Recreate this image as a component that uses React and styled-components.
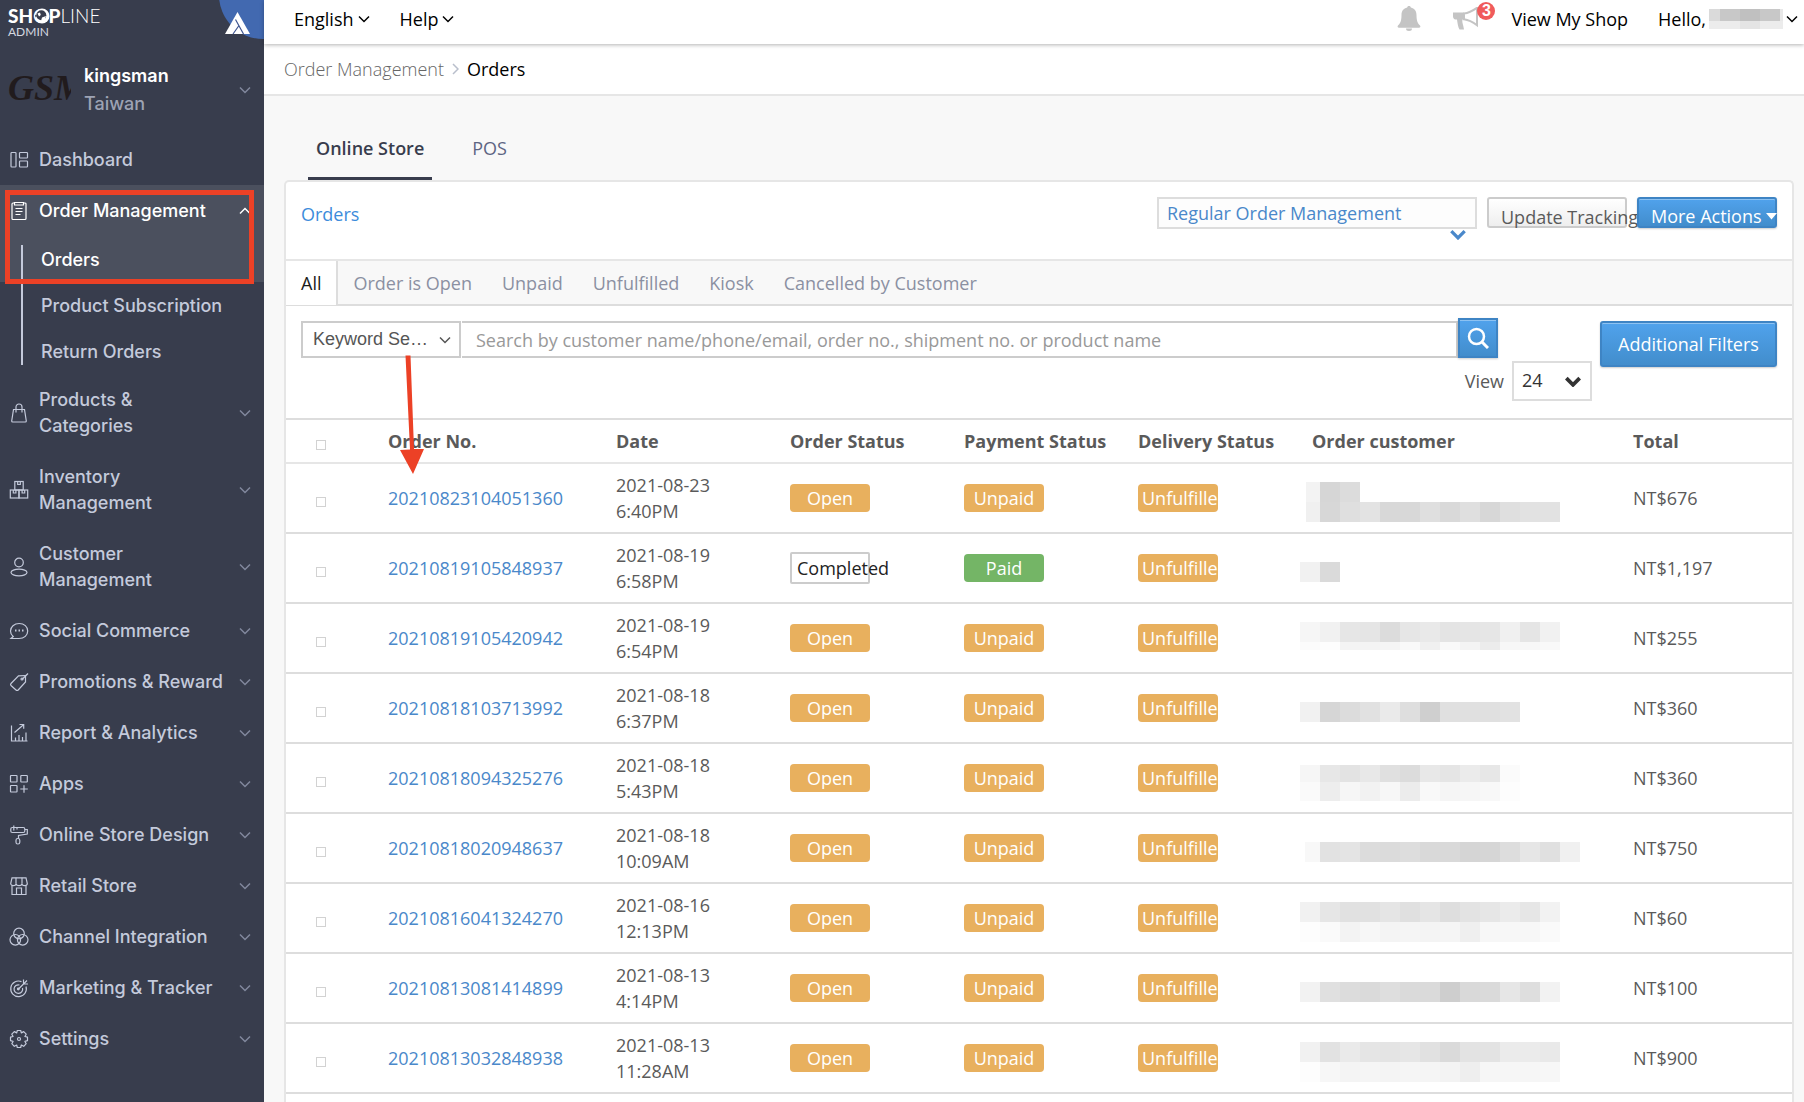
/**
 * Orders page of the store admin
 *
 * Sidebar navigation, top bar and the order list
 */

import React from 'react';
import styled, { createGlobalStyle, ThemeProvider } from 'styled-components';

const theme = {
  colors: {
    sidebar: '#383d4d',
    sidebarActive: '#4b505e',
    sidebarText: '#c4cadb',
    sidebarMuted: '#9da3b4',
    link: '#4a88ca',
    text: '#5a5a5a',
    page: '#f8f8f8',
    line: '#e6e6e6',
    rowLine: '#dddddd',
    control: '#cccccc',
    orange: '#e8b05e',
    green: '#74b566',
    mark: '#ec4126'
  },
  fonts: {
    body: "'Open Sans', 'Noto Sans', sans-serif",
    nav: "Inter, 'Liberation Sans', sans-serif"
  }
};

const GlobalStyle = createGlobalStyle`
  *, *::before, *::after {
    box-sizing: border-box;
  }

  body {
    margin: 0;
    background: ${theme.colors.page};
    color: ${theme.colors.text};
    font-family: ${theme.fonts.body};
    font-size: 18px;
    line-height: 26px;
  }

  a {
    color: inherit;
    text-decoration: none;
  }

  button, input, select {
    font: inherit;
    margin: 0;
  }
`;

/* ---------- layout ---------- */

const Page = styled.div`
  display: flex;
  height: 100vh;
  overflow: hidden;
`;

const Main = styled.main`
  flex: 1;
  min-width: 0;
  display: flex;
  flex-direction: column;
`;

/* ---------- sidebar ---------- */

const Sidebar = styled.aside`
  position: relative;
  flex: 0 0 264px;
  background: ${props => props.theme.colors.sidebar};
  color: ${props => props.theme.colors.sidebarText};
  font-family: ${props => props.theme.fonts.nav};
  font-weight: 500;
`;

const Brand = styled.div`
  height: 54px;
  padding: 6px 8px;
  color: #ffffff;
  font-family: Lato, sans-serif;
`;

const BrandName = styled.div`
  position: relative;
  width: max-content;
  font-size: 19px;
  line-height: 20px;
  font-weight: 300;

  b {
    font-weight: 900;
  }
`;

const BrandBird = styled.svg`
  position: absolute;
  left: 26px;
  top: 2px;
`;

const BrandSub = styled.div`
  font-size: 12px;
  line-height: 12px;
  font-weight: 400;
  color: #d5d8e0;
`;

const CornerLogo = styled.svg`
  position: absolute;
  top: 0;
  right: 0;
`;

const Profile = styled.div`
  display: flex;
  align-items: center;
  height: 80px;
  padding: 0 13px 8px 8px;
`;

const ShopLogo = styled.svg`
  margin: 0 13px 4px 0;
`;

const ShopInfo = styled.div`
  flex: 1;
  line-height: 28px;
  color: ${props => props.theme.colors.sidebarMuted};

  strong {
    display: block;
    font-weight: 600;
    color: #ffffff;
  }
`;

const NavGroup = styled.div`
  background: ${props => props.$open ? props.theme.colors.sidebarActive : 'none'};
`;

const NavLink = styled.a`
  display: flex;
  align-items: center;
  padding: 13px 13px 12px 9px;
  color: ${props => props.$active ? '#ffffff' : 'inherit'};
`;

const NavLabel = styled.span`
  flex: 1;
  margin-left: 10px;
  white-space: pre;
`;

const SubNav = styled.div`
  position: relative;

  &::before {
    content: '';
    position: absolute;
    left: 21px;
    top: 9px;
    bottom: 9px;
    width: 2px;
    background: ${props => props.theme.colors.sidebarText};
  }
`;

const SubLink = styled.a`
  display: block;
  padding: 2px 0 0 41px;
  line-height: 44px;
  color: ${props => props.$active ? '#ffffff' : 'inherit'};
  background: ${props => props.$active ? props.theme.colors.sidebarActive : props.theme.colors.sidebar};
`;

const Highlight = styled.div`
  position: absolute;
  left: 5px;
  right: 10px;
  top: 190px;
  height: 94px;
  border: 5px solid ${props => props.theme.colors.mark};
  pointer-events: none;
`;

/* ---------- top bar ---------- */

const TopBar = styled.header`
  position: relative;
  z-index: 1;
  display: flex;
  align-items: center;
  height: 44px;
  padding: 0 6px 6px 30px;
  background: #ffffff;
  color: #000000;
  box-shadow: 0 1px 4px rgba(0, 0, 0, 0.3);
`;

const MenuButton = styled.button`
  display: flex;
  align-items: center;
  gap: ${props => props.$last ? '3px' : '4px'};
  margin-right: ${props => props.$last ? '0' : '30px'};
  padding: 0;
  border: 0;
  background: none;
  color: inherit;
`;

const Spacer = styled.div`
  flex: 1;
`;

const IconButton = styled.button`
  position: relative;
  display: flex;
  margin-right: 32px;
  padding: 0;
  border: 0;
  background: none;
`;

const Count = styled.span`
  position: absolute;
  right: -16px;
  top: -5px;
  width: 18px;
  height: 18px;
  border-radius: 50%;
  background: #f05b5b;
  color: #ffffff;
  font: bold 16px/18px 'Liberation Sans', sans-serif;
  text-align: center;
`;

const ShopLink = styled.a`
  margin-right: 30px;
`;

const Breadcrumb = styled.nav`
  display: flex;
  align-items: center;
  gap: 8px;
  height: 52px;
  padding: 0 20px;
  background: #ffffff;
  border-bottom: 2px solid ${props => props.theme.colors.line};
  color: #000000;

  a {
    font-weight: 300;
    color: #666666;
  }
`;

/* ---------- content ---------- */

const StoreTabs = styled.div`
  display: flex;
  align-items: flex-end;
  gap: 32px;
  height: 84px;
  padding: 0 44px;
`;

const StoreTab = styled.button`
  height: 64px;
  padding: 18px 8px 15px;
  border: 0;
  border-bottom: 3px solid ${props => props.$active ? props.theme.colors.sidebar : 'transparent'};
  background: none;
  font-weight: ${props => props.$active ? 600 : 400};
  color: ${props => props.$active ? props.theme.colors.sidebar : '#5d6583'};
`;

const Panel = styled.section`
  flex: 1;
  margin: 0 10px 0 20px;
  border: 2px solid ${props => props.theme.colors.line};
  border-bottom: 0;
  border-radius: 5px 5px 0 0;
  background: #ffffff;
`;

const PanelHead = styled.div`
  display: flex;
  align-items: flex-start;
  height: 79px;
  padding: 15px;
  border-bottom: 2px solid ${props => props.theme.colors.line};
`;

const PanelTitle = styled.a`
  flex: 1;
  padding-top: 4px;
  color: #3c8cdb;
`;

const SelectBox = styled.div`
  position: relative;
  flex: none;

  svg {
    position: absolute;
    pointer-events: none;
  }
`;

const TypeSelect = styled.select`
  display: block;
  width: 320px;
  height: 32px;
  padding: 0 8px;
  appearance: none;
  border: 2px solid ${props => props.theme.colors.rowLine};
  border-radius: 0;
  background: #fdfdfd;
  color: ${props => props.theme.colors.link};

  & + svg {
    right: 11px;
    top: 32px;
  }
`;

const PlainButton = styled.button`
  width: 140px;
  height: 31px;
  margin: 0 10px;
  padding: 7px 0 0 12px;
  border: 2px solid ${props => props.theme.colors.control};
  border-radius: 3px;
  background: linear-gradient(#ffffff, #eeeeee);
  color: ${props => props.theme.colors.text};
  line-height: 22px;
  text-align: left;
  white-space: nowrap;
`;

const BlueButton = styled.button`
  display: flex;
  align-items: center;
  justify-content: center;
  flex: none;
  border: 2px solid #3e84c4;
  border-radius: 3px;
  background: linear-gradient(#50a2ec, #428dcc);
  box-shadow: inset 0 1px 0 rgba(255, 255, 255, 0.35), 0 1px 2px rgba(0, 0, 0, 0.2);
  color: #ffffff;
  white-space: nowrap;
`;

const ActionsButton = styled(BlueButton)`
  width: 140px;
  height: 31px;
  padding: 7px 0 0 12px;
  justify-content: flex-start;
  gap: 4px;
  line-height: 22px;

  svg {
    flex: none;
  }
`;

const SearchButton = styled(BlueButton)`
  width: 40px;
  height: 40px;
  padding: 0;
  border-radius: 0;
`;

const FilterButton = styled(BlueButton)`
  width: 177px;
  height: 46px;
  margin-top: 3px;
  padding: 0;
`;

const StatusTabs = styled.div`
  display: flex;
  height: 45px;
  border-bottom: 2px solid ${props => props.theme.colors.rowLine};
  background: ${props => props.theme.colors.page};
`;

const StatusTab = styled.button`
  padding: 0 15px;
  border: 0;
  background: none;
  color: #8b90a2;

  ${props => props.$active && `
    border-right: 2px solid #dddddd;
    height: 44px;
    background: #ffffff;
    color: #1b1b1b;
  `}
`;

const Filters = styled.div`
  display: flex;
  align-items: flex-start;
  gap: 8px;
  padding: 12px 15px 17px;
`;

const FilterFields = styled.div`
  flex: 1;
  min-width: 0;
`;

const SearchRow = styled.div`
  display: flex;
  align-items: flex-end;
  margin-right: 94px;
`;

const KeywordSelect = styled.select`
  display: block;
  width: 160px;
  height: 37px;
  padding: 0 10px 2px;
  appearance: none;
  border: 2px solid ${props => props.theme.colors.control};
  border-radius: 0;
  background: #ffffff;
  color: #555555;
  font-family: 'Liberation Sans', sans-serif;

  & + svg {
    right: 10px;
    top: 15px;
  }
`;

const SearchInput = styled.input`
  flex: 1;
  min-width: 0;
  height: 37px;
  margin-left: 1px;
  padding: 0 14px;
  border: 2px solid ${props => props.theme.colors.control};
  border-left: 0;
  border-radius: 0;
  background: #ffffff;

  &::placeholder {
    color: #999999;
    opacity: 1;
  }
`;

const ViewRow = styled.div`
  display: flex;
  align-items: center;
  justify-content: flex-end;
  gap: 8px;
  margin-top: 3px;
`;

const ViewSelect = styled.select`
  display: block;
  width: 80px;
  height: 40px;
  padding: 0 8px 2px;
  appearance: none;
  border: 2px solid ${props => props.theme.colors.rowLine};
  border-radius: 0;
  background: #ffffff;
  color: #333333;

  & + svg {
    right: 11px;
    top: 15px;
  }
`;

/* ---------- table ---------- */

const Table = styled.table`
  width: 100%;
  table-layout: fixed;
  border-collapse: separate;
  border-spacing: 0;
  border-top: 2px solid ${props => props.theme.colors.rowLine};

  th {
    height: 44px;
    padding: 0;
    border-bottom: 2px solid ${props => props.theme.colors.line};
    font-weight: 700;
    text-align: left;
    white-space: nowrap;
  }

  td {
    position: relative;
    height: 70px;
    padding: 0;
    border-bottom: 2px solid ${props => props.theme.colors.rowLine};
  }
`;

const Check = styled.input`
  display: block;
  width: 10px;
  height: 10px;
  margin: 8px 0 0 30px;
  appearance: none;
  border: 1px solid #d2d2d2;
  background: #ffffff;
`;

const OrderLink = styled.a`
  color: ${props => props.theme.colors.link};
`;

const DateText = styled.span`
  white-space: pre;
`;

const Badge = styled.span`
  display: block;
  width: 80px;
  height: 28px;
  padding: 0 4px;
  border-radius: 4px;
  background: ${props => props.$tone === 'green' ? props.theme.colors.green : props.theme.colors.orange};
  color: #ffffff;
  line-height: 28px;
  text-align: center;
  white-space: nowrap;
  overflow: hidden;
`;

const OutlineBadge = styled(Badge)`
  height: 32px;
  padding: 0 5px;
  border: 2px solid ${props => props.theme.colors.control};
  border-radius: 2px;
  background: #ffffff;
  color: #222222;
  overflow: visible;
`;

const MaskSvg = styled.svg`
  position: absolute;
  left: -12px;
  top: 0;
`;

const Arrow = styled.svg`
  position: absolute;
  left: 399px;
  top: 354px;
  pointer-events: none;
`;

/* ---------- icons ---------- */

const Chevron = ({ width = 12, height = 8, color = 'currentColor', stroke = 2, up }) => (
  <svg width={width} height={height} viewBox="0 0 12 8" fill="none" stroke={color} strokeWidth={stroke} aria-hidden="true">
    <path d={up ? 'M1 6.5 6 1.5l5 5' : 'M1 1.5 6 6.5l5-5'} />
  </svg>
);

const navIcons = {
  dashboard: (
    <>
      <rect x="2" y="2.5" width="5" height="14.5" rx="0.8" />
      <rect x="10.5" y="2.5" width="8" height="5.5" rx="0.8" />
      <rect x="10.5" y="11" width="8" height="6" rx="0.8" />
    </>
  ),
  orders: (
    <>
      <path d="M5.5 2H4a1 1 0 0 0-1 1v14.500a1 1 0 0 0 1 1h12a1 1 0 0 0 1-1V3a1 1 0 0 0-1-1h-1.500" />
      <path d="M5.500 1.500h9v2.500h-9z" />
      <path d="M6.500 7.500h7M6.500 10.500h7M6.500 13.500h5" />
    </>
  ),
  bag: (
    <>
      <path d="M4.500 6.500h11l1.800 11.500a1 1 0 0 1-1 1H3.700a1 1 0 0 1-1-1z" />
      <path d="M7 9.500V4a3 3 0 0 1 6 0v5.500" />
    </>
  ),
  boxes: (
    <>
      <rect x="5.800" y="1.500" width="8.400" height="8.500" />
      <rect x="1.300" y="10" width="8.700" height="8" />
      <rect x="10" y="10" width="8.700" height="8" />
      <path d="M8.700 1.500v3h2.600v-3M4.300 10v3h2.600v-3M13.100 10v3h2.600v-3" />
    </>
  ),
  customer: (
    <>
      <circle cx="10" cy="5.500" r="4.300" />
      <ellipse cx="10" cy="15.500" rx="8" ry="3.300" />
    </>
  ),
  chat: (
    <>
      <path d="M2 17.500h8c5.200 0 8.700-3.300 8.700-7.500S15.200 2.500 10.200 2.500 1.500 5.800 1.500 10c0 2.400 1 4.200 2.700 5.500z" />
      <path d="M6 9.500h1.500M9.500 9.500H11M13 9.500h1.500" strokeWidth="1.800" />
    </>
  ),
  tag: (
    <>
      <path d="M16.500 3.500 9.500 3.800 2 11.500a1.500 1.500 0 0 0 0 2l5 4.500a1.500 1.500 0 0 0 2.200 0L16.500 10z" />
      <path d="M13 7.500 19 1.500" />
      <circle cx="13" cy="7" r="1" />
    </>
  ),
  chart: (
    <>
      <path d="M2.500 2.500V18h16M6.500 18v-3.500M10 18v-6M13.500 18v-4M17 18V9.500" />
      <path d="M5.500 9.500 14.500 1.800M10.500 1.500h4.200v4.200" />
    </>
  ),
  apps: (
    <>
      <rect x="1.500" y="1.500" width="6.500" height="6.500" rx="0.500" />
      <rect x="11.800" y="1.500" width="6.500" height="6.500" rx="0.500" />
      <rect x="1.500" y="11.500" width="6.500" height="6.500" rx="0.500" />
      <path d="M15 11.300v7.500M11.300 15h7.500" />
    </>
  ),
  roller: (
    <>
      <rect x="1.800" y="2.500" width="14" height="5" rx="1.500" />
      <path d="M4.800 0.500v5M8 2.500v2M15.800 4.500h2.500V9L9.500 10.500v3" />
      <rect x="7" y="13.500" width="3.800" height="5.500" rx="1.800" />
    </>
  ),
  store: (
    <>
      <path d="M3 1.800h14L18.300 7.500a2.700 2.200 0 0 1-5.400 0 2.900 2.200 0 0 1-5.800 0 2.700 2.200 0 0 1-5.400 0z" />
      <path d="M7 7.500V1.800M13 7.500V1.800M3 9.500V18.500h14V9.500M7.500 18.500V12h5v6.500" />
    </>
  ),
  circles: (
    <>
      <circle cx="10" cy="6.500" r="5.300" />
      <circle cx="6.300" cy="12.800" r="5.300" />
      <circle cx="13.700" cy="12.800" r="5.300" />
    </>
  ),
  target: (
    <>
      <path d="M12.500 3.600A7.800 7.800 0 1 0 17 8.500" />
      <path d="M10.500 7A4.300 4.300 0 1 0 13.500 10" />
      <path d="M9 11.500 18 2.500M14.500 1.500V6h4.500" />
      <circle cx="9.300" cy="11" r="0.800" />
    </>
  ),
  gear: (
    <>
      <path d="M8.300 1.500h3.400l.6 2.400 2.400-1.300 2.500 2.600-1.300 2.300 2.600.7v3.500l-2.600.7 1.300 2.300-2.500 2.600-2.400-1.300-.6 2.500H8.300l-.6-2.500-2.400 1.300-2.500-2.600 1.300-2.300-2.600-.7V8.200l2.600-.7-1.300-2.300 2.500-2.600 2.400 1.300z" strokeLinejoin="round" />
      <circle cx="10" cy="10" r="1.500" />
    </>
  )
};

const NavIcon = ({ name }) => (
  <svg width="20" height="20" viewBox="0 0 20 20" fill="none" stroke="currentColor" strokeWidth="1.2" aria-hidden="true">
    {navIcons[name]}
  </svg>
);

const BellIcon = () => (
  <svg width="24" height="26" viewBox="0 0 24 26" fill="#c4c4c4" aria-hidden="true">
    <path d="M12 0c1.100 0 1.800.7 1.800 1.600 3.700.8 5.700 3.600 5.700 7.400 0 6.500 1.500 8.500 3.500 10.500.9 1 .3 2.300-1 2.300H2c-1.300 0-1.900-1.300-1-2.300C3 17.500 4.500 15.500 4.500 9c0-3.800 2-6.600 5.700-7.400C10.200.7 10.900 0 12 0zM9 22.500h6a3 2.500 0 0 1-6 0z" />
  </svg>
);

const HornIcon = () => (
  <svg width="26" height="24" viewBox="0 0 26 24" aria-hidden="true">
    <path d="M0 5.500h11v7H9.500c-.6 2 .2 4 .8 6.500L11 22.500H6.500C5 20 4.500 16 4 12.500H2.500C1 12.500 0 11 0 9.500z" fill="#c4c4c4" />
    <path d="M11 6.500C16 5.800 20 3.500 24 .8v17.500c-4-3-8-5.300-13-6z" fill="#ffffff" stroke="#c4c4c4" strokeWidth="2" />
  </svg>
);

/* ---------- data ---------- */

const navItems = [
  { icon: 'dashboard', label: 'Dashboard', plain: true },
  {
    icon: 'orders',
    label: 'Order Management',
    open: true,
    children: ['Orders', 'Product Subscription', 'Return Orders']
  },
  { icon: 'bag', label: 'Products &\nCategories' },
  { icon: 'boxes', label: 'Inventory\nManagement' },
  { icon: 'customer', label: 'Customer\nManagement' },
  { icon: 'chat', label: 'Social Commerce' },
  { icon: 'tag', label: 'Promotions & Reward' },
  { icon: 'chart', label: 'Report & Analytics' },
  { icon: 'apps', label: 'Apps' },
  { icon: 'roller', label: 'Online Store Design' },
  { icon: 'store', label: 'Retail Store' },
  { icon: 'circles', label: 'Channel Integration' },
  { icon: 'target', label: 'Marketing & Tracker' },
  { icon: 'gear', label: 'Settings' }
];

const statusTabs = ['All', 'Order is Open', 'Unpaid', 'Unfulfilled', 'Kiosk', 'Cancelled by Customer'];

// mask: lines of grey squares over the customer, [top, height, inset, shades]
const orders = [
  { no: '20210823104051360', date: '2021-08-23\n6:40PM', total: 'NT$676', mask: [
    [18, 20, 6, 'f3 d6 dc'],
    [38, 20, 6, 'f0 d7 df e3 d8 d8 df d9 df d7 df e2 e2']
  ] },
  { no: '20210819105848937', date: '2021-08-19\n6:58PM', total: 'NT$1,197', done: true, mask: [
    [28, 20, 0, 'f1 da']
  ] },
  { no: '20210819105420942', date: '2021-08-19\n6:54PM', total: 'NT$255', mask: [
    [18, 20, 0, 'f6 f1 e6 e5 dc e6 e9 e4 e5 e6 f0 e5 f1'],
    [38, 8, 0, 'fb fd f4 f4 f5 f9 f0 f9 f4 ec f7 f7 f9']
  ] },
  { no: '20210818103713992', date: '2021-08-18\n6:37PM', total: 'NT$360', mask: [
    [28, 20, 0, 'f1 d6 dc e1 ea de cf e0 e0 e0 e2']
  ] },
  { no: '20210818094325276', date: '2021-08-18\n5:43PM', total: 'NT$360', mask: [
    [21, 17, 0, 'f6 e7 e3 e8 e0 dc e8 e5 eb e7 fb'],
    [38, 19, 0, 'fa ed f6 f2 f7 ec f9 f5 f6 f8 fd']
  ] },
  { no: '20210818020948637', date: '2021-08-18\n10:09AM', total: 'NT$750', mask: [
    [28, 20, 5, 'f8 e2 e4 dc db dd d9 d9 d5 d6 dd e6 e0 f0']
  ] },
  { no: '20210816041324270', date: '2021-08-16\n12:13PM', total: 'NT$60', mask: [
    [18, 20, 0, 'f1 e6 e1 e1 e5 e0 e5 de e3 e6 eb e6 f2'],
    [38, 20, 0, 'fd fa f3 f7 f4 f5 f4 f5 ef f7 f7 f7 fa']
  ] },
  { no: '20210813081414899', date: '2021-08-13\n4:14PM', total: 'NT$100', mask: [
    [28, 20, 0, 'f2 e0 dc da de da da ce d9 da e6 de f2']
  ] },
  { no: '20210813032848938', date: '2021-08-13\n11:28AM', total: 'NT$900', mask: [
    [18, 20, 0, 'f1 e2 ea e5 e4 e6 e1 da e3 e3 eb eb e9'],
    [38, 20, 0, 'fd f7 f4 f5 f4 f5 f5 f3 ee f6 f6 f6 f7']
  ] }
];

const CustomerMask = ({ lines }) => (
  <MaskSvg width="280" height="60" shapeRendering="crispEdges" aria-hidden="true">
    {lines.map(([top, height, inset, shades]) =>
      shades.split(' ').map((shade, i) => (
        <rect
          key={`${top}-${i}`}
          x={i === 0 ? inset : i * 20}
          y={top}
          width={i === 0 ? 20 - inset : 20}
          height={height}
          fill={`#${shade}${shade}${shade}`}
        />
      ))
    )}
  </MaskSvg>
);

const NavItem = ({ item }) => (
  <NavGroup $open={item.open}>
    <NavLink href="#" $active={item.open}>
      <NavIcon name={item.icon} />
      <NavLabel>{item.label}</NavLabel>
      {!item.plain && (
        <Chevron color={item.open ? '#ffffff' : '#81889d'} stroke={1.5} up={item.open} />
      )}
    </NavLink>
    {item.children && (
      <SubNav>
        {item.children.map((label, i) => (
          <SubLink key={label} href="#" $active={i === 0}>{label}</SubLink>
        ))}
      </SubNav>
    )}
  </NavGroup>
);

const OrderRow = ({ order }) => (
  <tr>
    <td><Check type="checkbox" aria-label={`Select ${order.no}`} /></td>
    <td><OrderLink href="#">{order.no}</OrderLink></td>
    <td><DateText>{order.date}</DateText></td>
    <td>{order.done ? <OutlineBadge>Completed</OutlineBadge> : <Badge>Open</Badge>}</td>
    <td>{order.done ? <Badge $tone="green">Paid</Badge> : <Badge>Unpaid</Badge>}</td>
    <td><Badge>Unfulfilled</Badge></td>
    <td><CustomerMask lines={order.mask} /></td>
    <td>{order.total}</td>
  </tr>
);

const App = () => (
  <ThemeProvider theme={theme}>
    <GlobalStyle />
    <Page>
      <Sidebar>
        <Brand>
          <BrandName>
            <b>SHOP</b>LINE
            <BrandBird width="16" height="16" viewBox="0 0 16 16" aria-hidden="true">
              <circle cx="8" cy="8" r="7.500" fill="#ffffff" />
              <circle cx="7.300" cy="7.300" r="5" fill="#383d4d" />
              <path d="M3.500 5.500 6 4.500l.8 2.500L5 8.500zM8 9.500l4-1.500-1.500 4-3.500 1z" fill="#ffffff" />
              <path d="M1 6.500 3 8l-1.500 1.500z" fill="#383d4d" />
            </BrandBird>
          </BrandName>
          <BrandSub>ADMIN</BrandSub>
        </Brand>
        <CornerLogo width="45" height="40" viewBox="0 0 45 40" aria-hidden="true">
          <circle cx="44" cy="-5" r="44" fill="#4269b0" />
          <path d="M18.500 12 31 34H6z" fill="#ffffff" />
          <path d="M16.500 19.500 24.500 34M20 25.500 14 34" fill="none" stroke="#3f5590" strokeWidth="1.200" />
        </CornerLogo>

        <Profile>
          <ShopLogo width="63" height="32" viewBox="0 0 63 32" aria-hidden="true">
            <text x="0" y="28" fill="#211b1d" fontFamily="Liberation Serif, serif" fontSize="36" fontStyle="italic" fontWeight="700">GSM</text>
          </ShopLogo>
          <ShopInfo>
            <strong>kingsman</strong>
            Taiwan
          </ShopInfo>
          <Chevron color="#81889d" stroke={1.5} />
        </Profile>

        <nav>
          {navItems.map(item => <NavItem key={item.label} item={item} />)}
        </nav>
        <Highlight />
      </Sidebar>

      <Main>
        <TopBar>
          <MenuButton>English <Chevron stroke={1.5} /></MenuButton>
          <MenuButton>Help <Chevron stroke={1.5} /></MenuButton>
          <Spacer />
          <IconButton aria-label="Notifications"><BellIcon /></IconButton>
          <IconButton aria-label="Announcements">
            <HornIcon />
            <Count>3</Count>
          </IconButton>
          <ShopLink href="#">View My Shop</ShopLink>
          <MenuButton $last>
            Hello,
            <svg width="74" height="20" shapeRendering="crispEdges" aria-hidden="true">
              <rect width="74" height="12" fill="#c8c8c8" />
              <rect width="11" height="12" fill="#dadada" />
              <rect x="31" width="20" height="12" fill="#c0c0c0" />
              <rect x="71" width="3" height="12" fill="#e8e8e8" />
              <rect y="12" width="74" height="8" fill="#ececec" />
              <rect x="31" y="12" width="20" height="8" fill="#e4e4e4" />
            </svg>
            <Chevron stroke={1.5} />
          </MenuButton>
        </TopBar>

        <Breadcrumb>
          <a href="#">Order Management</a>
          <svg width="7" height="12" viewBox="0 0 7 12" fill="none" stroke="#b9bfcc" strokeWidth="1.500" aria-hidden="true">
            <path d="M1 1l5 5-5 5" />
          </svg>
          <span>Orders</span>
        </Breadcrumb>

        <StoreTabs>
          <StoreTab $active>Online Store</StoreTab>
          <StoreTab>POS</StoreTab>
        </StoreTabs>

        <Panel>
          <PanelHead>
            <PanelTitle href="#">Orders</PanelTitle>
            <SelectBox>
              <TypeSelect aria-label="Order type">
                <option>Regular Order Management</option>
              </TypeSelect>
              <Chevron width={16} height={11} color="#4a88ca" stroke={2.5} />
            </SelectBox>
            <PlainButton>Update Tracking</PlainButton>
            <ActionsButton>
              More Actions
              <svg width="11" height="7" viewBox="0 0 11 7" fill="#ffffff" aria-hidden="true">
                <path d="M0 0h11L5.500 6.500z" />
              </svg>
            </ActionsButton>
          </PanelHead>

          <StatusTabs>
            {statusTabs.map((label, i) => (
              <StatusTab key={label} $active={i === 0}>{label}</StatusTab>
            ))}
          </StatusTabs>

          <Filters>
            <FilterFields>
              <SearchRow>
                <SelectBox>
                  <KeywordSelect aria-label="Search type">
                    <option>Keyword Se…</option>
                  </KeywordSelect>
                  <Chevron color="#555555" stroke={1.5} />
                </SelectBox>
                <SearchInput
                  aria-label="Search orders"
                  placeholder="Search by customer name/phone/email, order no., shipment no. or product name"
                />
                <SearchButton aria-label="Search">
                  <svg width="22" height="22" viewBox="0 0 22 22" fill="none" stroke="#ffffff" strokeWidth="2.500" aria-hidden="true">
                    <circle cx="9.500" cy="9.500" r="7.500" />
                    <path d="M15 15l6 6" strokeWidth="3" />
                  </svg>
                </SearchButton>
              </SearchRow>
              <ViewRow>
                <label htmlFor="page-size">View</label>
                <SelectBox>
                  <ViewSelect id="page-size">
                    <option>24</option>
                  </ViewSelect>
                  <Chevron width={16} height={11} color="#333333" stroke={2.8} />
                </SelectBox>
              </ViewRow>
            </FilterFields>
            <FilterButton>Additional Filters</FilterButton>
          </Filters>

          <Table>
            <colgroup>
              <col width="102" />
              <col width="228" />
              <col width="174" />
              <col width="174" />
              <col width="174" />
              <col width="174" />
              <col width="321" />
              <col />
            </colgroup>
            <thead>
              <tr>
                <th><Check type="checkbox" aria-label="Select all orders" /></th>
                <th>Order No.</th>
                <th>Date</th>
                <th>Order Status</th>
                <th>Payment Status</th>
                <th>Delivery Status</th>
                <th>Order customer</th>
                <th>Total</th>
              </tr>
            </thead>
            <tbody>
              {orders.map(order => <OrderRow key={order.no} order={order} />)}
            </tbody>
          </Table>
        </Panel>
      </Main>

      <Arrow width="28" height="122" viewBox="0 0 28 122" fill="#ec4126" aria-hidden="true">
        <path d="M6.500 1.500h5l3.500 93.500h10L14 120 1 96l10-.5z" />
      </Arrow>
    </Page>
  </ThemeProvider>
);

export default App;
